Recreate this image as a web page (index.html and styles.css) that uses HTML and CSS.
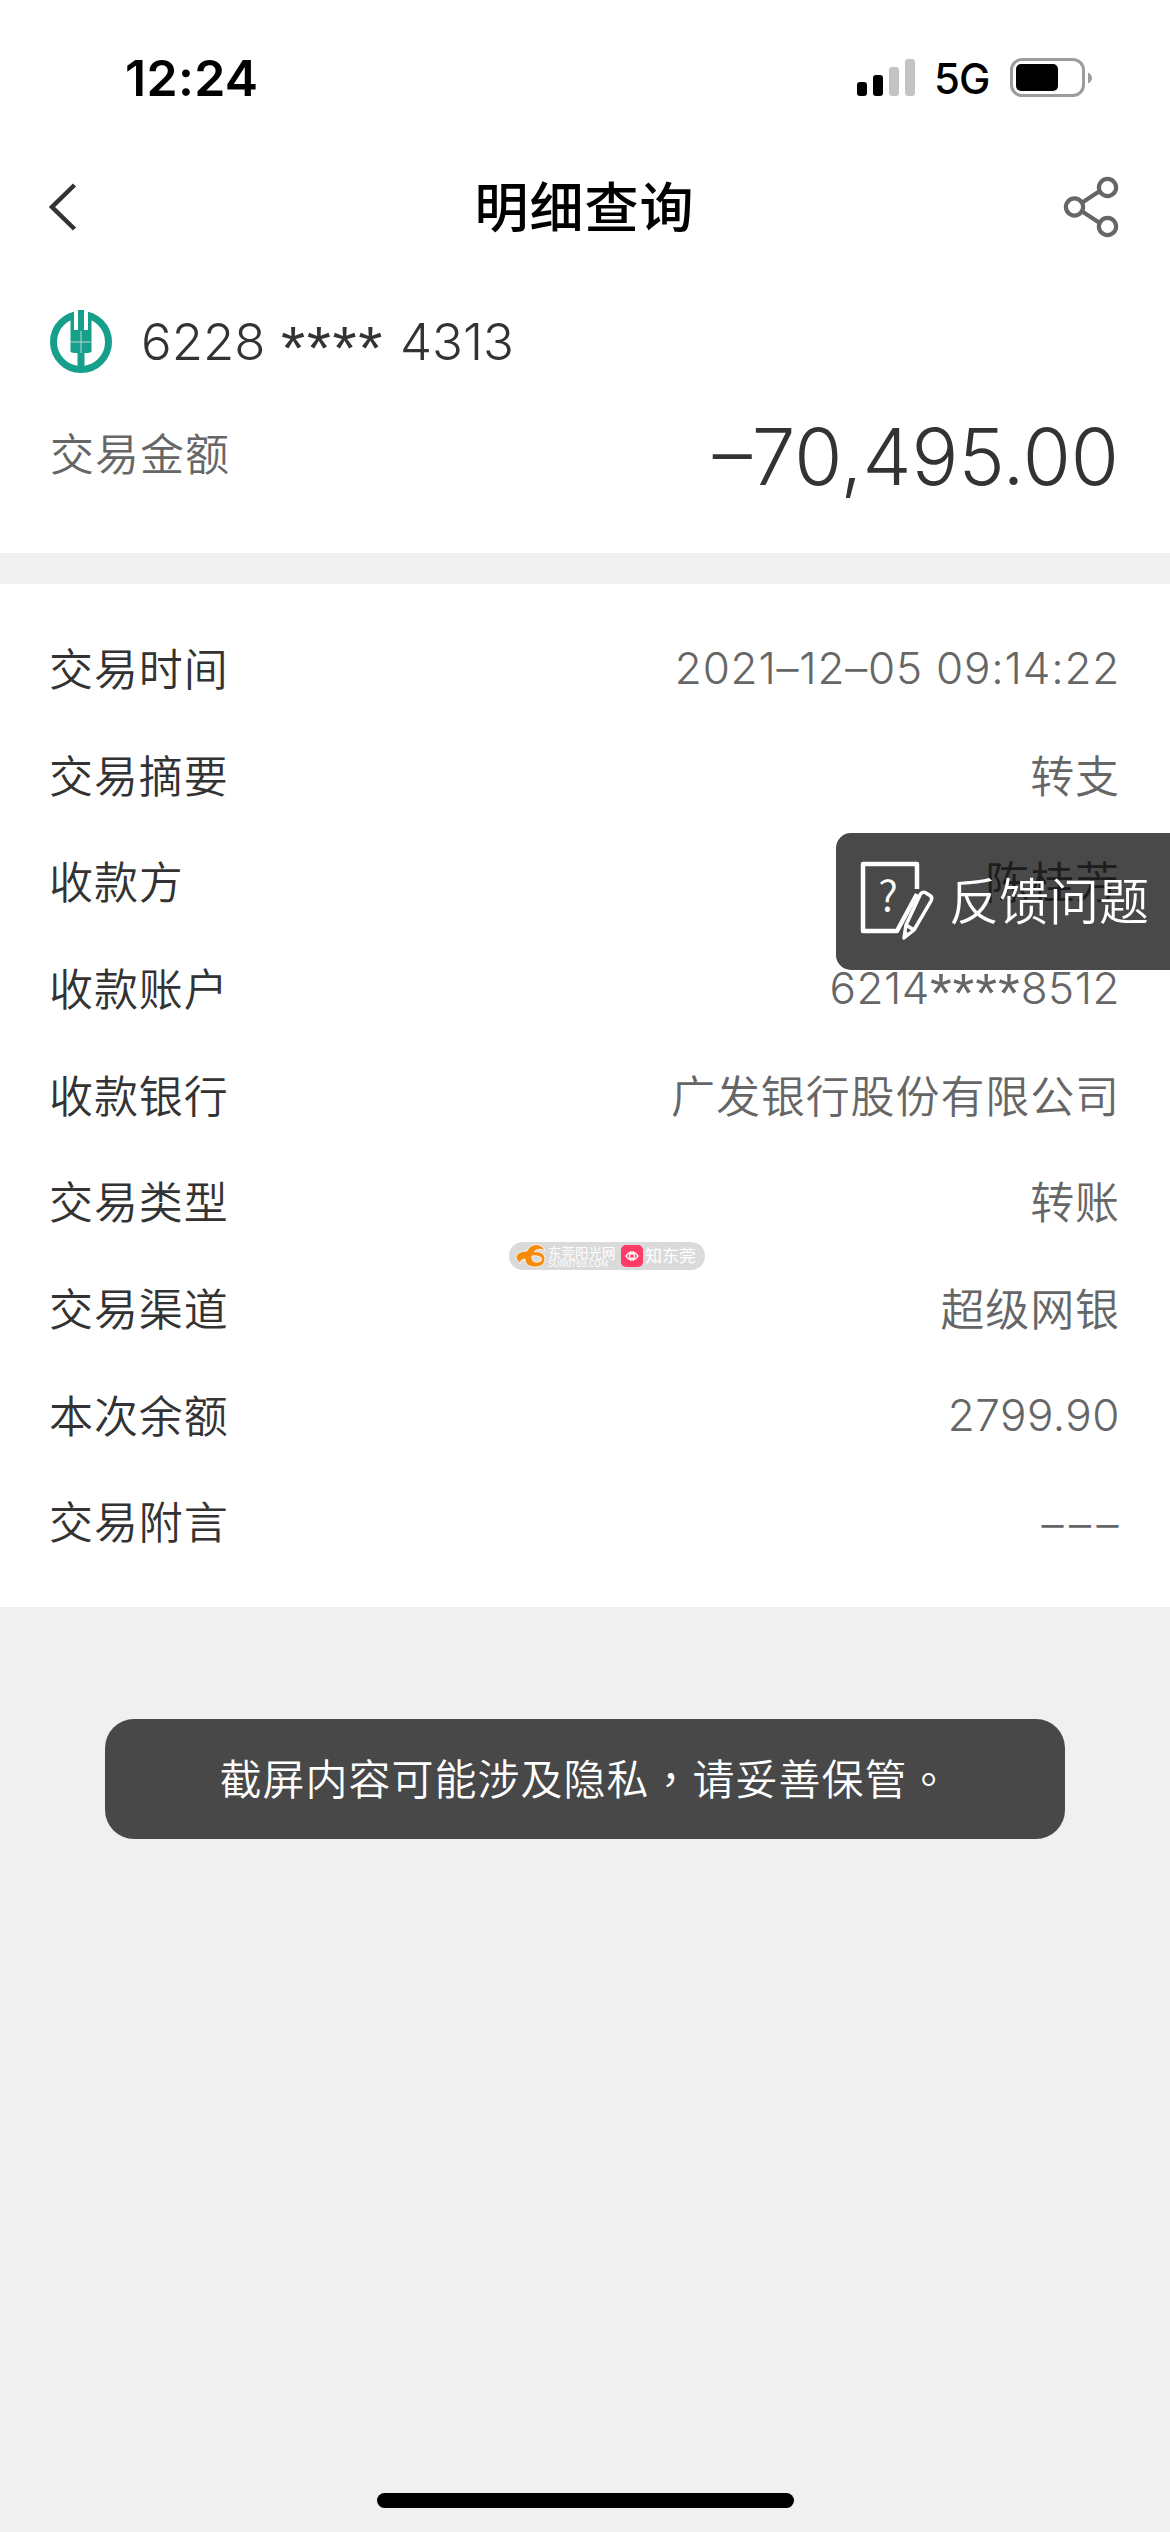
FILE: index.html
```html
<!DOCTYPE html>
<html lang="zh-CN">
<head>
<meta charset="utf-8">
<title>明细查询</title>
<link rel="stylesheet" href="styles.css">
</head>
<body>
<header class="status">
  <span class="time">12:24</span>
  <div class="status-right">
    <svg class="signal" width="58" height="38" viewBox="0 0 58 38">
      <rect x="0" y="23" width="10" height="14" rx="3"/>
      <rect x="16" y="16" width="10" height="21" rx="3"/>
      <rect class="off" x="32" y="8" width="10" height="29" rx="3"/>
      <rect class="off" x="48" y="0" width="10" height="37" rx="3"/>
    </svg>
    <span class="network">5G</span>
    <svg class="battery" width="83" height="40" viewBox="0 0 83 40">
      <rect class="shell" x="1.5" y="1.5" width="72" height="36" rx="10.5"/>
      <rect x="6" y="6" width="42" height="27" rx="5"/>
      <path class="nub" d="M78 14.5C80.500 15.500 82 17.500 82 20C82 22.500 80.500 24.500 78 25.500Z"/>
    </svg>
  </div>
</header>
<nav class="navbar">
  <svg class="back" width="28" height="48" viewBox="0 0 28 48"><path d="M25.500 2L3 24L25.500 46"/></svg>
  <h1 class="title">明细查询</h1>
  <svg class="share" width="56" height="62" viewBox="0 0 56 62">
    <path d="M20 26L36 15.500M20 36L36 46.500"/>
    <circle cx="11.500" cy="31" r="8.600"/><circle cx="44.500" cy="11.500" r="8.600"/><circle cx="44.500" cy="50.500" r="8.600"/>
  </svg>
</nav>
<section class="summary">
  <div class="account">
    <svg class="logo" width="62" height="64" viewBox="0 0 62 64">
      <circle class="ring" cx="31" cy="32" r="27.500"/>
      <path class="gap" d="M24 0H38V21H24Z"/>
      <path class="mark" d="M20.500 4L24 2V20H28V0H34V20H38V2L41.500 4V42L38 43H34.500V62H27.500V43H24L20.500 42Z"/>
      <path class="seam" d="M31 21V43M21 32H41"/>
    </svg>
    <span class="number n1">6228</span><span class="number stars">****</span><span class="number n2">4313</span>
  </div>
  <div class="amount-row"><span class="muted">交易金额</span><span class="amount">–70,495.00</span></div>
</section>
<dl class="details">
  <div class="row"><dt>交易时间</dt><dd class="num date">2021–12–05 09:14:22</dd></div>
  <div class="row"><dt>交易摘要</dt><dd>转支</dd></div>
  <div class="row"><dt>收款方</dt><dd>陈桂芳</dd></div>
  <div class="row"><dt>收款账户</dt><dd class="num card">6214<span class="ast">****</span>8512</dd></div>
  <div class="row"><dt>收款银行</dt><dd>广发银行股份有限公司</dd></div>
  <div class="row"><dt>交易类型</dt><dd>转账</dd></div>
  <div class="row"><dt>交易渠道</dt><dd>超级网银</dd></div>
  <div class="row"><dt>本次余额</dt><dd class="num balance">2799.90</dd></div>
  <div class="row"><dt>交易附言</dt><dd class="num dashes">–––</dd></div>
</dl>
<div class="toast">截屏内容可能涉及隐私<span class="punct" lang="zh-TW">，</span>请妥善保管<span class="punct" lang="zh-TW">。</span></div>
<div class="home"></div>
<div class="feedback">
  <svg class="note" width="78" height="84" viewBox="0 0 78 84">
    <path class="page" d="M57 28V3H3V70H37L57 33"/>
    <path class="pen" d="M60.500 33Q62.500 30 66 32L70 34.500Q73 36.500 71 40L54 69L44 77L46 64Z M46 64L54 69"/>
    <path class="tip" d="M45 70L50 73L43 79Z"/>
    <text x="28" y="50" text-anchor="middle">?</text>
  </svg>
  <span class="feedback-label">反馈问题</span>
</div>
<div class="badge">
  <svg class="sun" width="32" height="24" viewBox="0 0 32 24">
    <path fill-rule="evenodd" d="M12 7C15 1 20 0 24 1C27 2 29 4 30 7C26 4 21 5 19 8C22 7 29 8 30 14C30 20 26 23 20 23C14 23 10 20 10 15C7 15 5 17 5 20C4 17 1 16 1 13C2 9 7 7 12 7ZM17 12C16 17 20 20 26 17C28 14 25 11 17 12Z"/>
  </svg>
  <span class="site">东莞阳光网<small>SUN0769.COM</small></span>
  <svg class="eye" width="22" height="22" viewBox="0 0 22 22">
    <rect width="22" height="22" rx="5"/><path d="M5 11Q11 3 17 11Q11 19 5 11Z"/><circle cx="11" cy="11" r="2.500"/>
  </svg>
  <span class="app">知东莞</span>
</div>
</body>
</html>
```
FILE: styles.css
```css
* { box-sizing: border-box; margin: 0; padding: 0; }
body {
  position: relative;
  width: 1170px;
  height: 2532px;
  overflow: hidden;
  display: flex;
  flex-direction: column;
  background: #f0f0f0;
  color: #333;
  font-family: "Noto Sans CJK SC", sans-serif;
}
svg { display: block; flex: none; }
.status {
  height: 156px;
  padding: 0 79px 0 125px;
  display: flex;
  justify-content: space-between;
  align-items: center;
  background: #fff;
  color: #000;
  font-family: Inter, sans-serif;
}
.time { font-size: 50px; font-weight: 600; letter-spacing: 0.300px; }
.status-right { display: flex; align-items: center; }
.off { fill: #c4c4c4; }
.network { width: 54px; margin: 0 22px 0 19px; font-size: 42px; font-weight: 500; letter-spacing: -1px; }
.battery { margin-right: -2px; }
.shell { fill: none; stroke: #9c9c9c; stroke-width: 3; }
.nub { fill: #9c9c9c; }
.navbar {
  height: 103px;
  padding: 0 51px 1px 49px;
  display: flex;
  align-items: center;
  justify-content: space-between;
  background: #fff;
}
.back path { fill: none; stroke: #333; stroke-width: 4.5; }
.title { color: #000; font-size: 54px; font-weight: 500; letter-spacing: 1px; line-height: 80px; padding: 0 0 4px 29px; }
.share path, .share circle { fill: none; stroke: #666; stroke-width: 4.2; }
.summary { height: 294px; padding: 51px 51px 0 50px; background: #fff; }
.account { height: 64px; display: flex; align-items: center; }
.ring { fill: none; stroke: #16a08b; stroke-width: 7; }
.gap { fill: #fff; }
.mark { fill: #16a08b; }
.seam { stroke: #b9d5cf; stroke-width: 1; }
.number { font-family: Inter, sans-serif; font-size: 51px; font-weight: 350; line-height: 64px; }
.n1 { margin-left: 29px; width: 140px; }
.stars { width: 119px; padding-top: 12px; font-family: "Liberation Sans", sans-serif; font-size: 62px; letter-spacing: 1.6px; }
.amount-row { height: 108px; margin-top: 27px; display: flex; align-items: center; justify-content: space-between; }
.muted { padding-bottom: 6px; color: #666; font-size: 44px; font-weight: 350; letter-spacing: 1px; }
.amount { padding-top: 3px; font-family: Inter, sans-serif; font-size: 78px; font-weight: 350; }
.details { height: 1023px; margin-top: 31px; padding-top: 30px; background: #fff; flex: none; }
.row { height: 106.700px; padding: 0 51px 0 49px; display: flex; align-items: center; justify-content: space-between; font-size: 44px; font-weight: 350; letter-spacing: 0.900px; }
dt, dd { padding-bottom: 1px; }
dd { color: #666; margin-right: -1px; }
.num { padding: 2px 0 0; font-family: Inter, sans-serif; font-weight: 350; letter-spacing: 0.500px; }
.date { letter-spacing: 0.800px; }
.ast { font-family: "Liberation Sans", sans-serif; font-size: 56px; line-height: 0; vertical-align: -8px; letter-spacing: 0.900px; }
.dashes { padding-top: 6px; letter-spacing: 5.500px; margin-right: -5px; }
.toast {
  width: 960px;
  height: 120px;
  margin: 112px auto 0;
  border-radius: 29px;
  background: #484848;
  color: #fff;
  font-size: 42px;
  font-weight: 350;
  letter-spacing: 1px;
  line-height: 116px;
  text-align: center;
}
.punct { font-family: "Noto Sans CJK TC", sans-serif; }
.home { width: 417px; height: 15px; margin: auto auto 24px; border-radius: 8px; background: #000; }
.feedback {
  position: absolute;
  top: 833px;
  right: 0;
  width: 334px;
  height: 137px;
  padding-left: 24px;
  display: flex;
  align-items: center;
  gap: 11px;
  border-radius: 15px 0 0 15px;
  background: rgba(0, 0, 0, 0.715);
  color: #fff;
  font-size: 50px;
  font-weight: 350;
  white-space: nowrap;
}
.feedback-label { padding-bottom: 8px; }
.note { margin-top: 3px; }
.note path { fill: none; stroke: #fff; stroke-width: 4.500; stroke-linejoin: round; }
.note .pen { stroke-width: 3.500; }
.note .tip { fill: #fff; stroke: none; }
.note text { fill: #fff; font-family: "Noto Sans CJK SC", sans-serif; font-size: 42px; font-weight: 350; }
.badge {
  position: absolute;
  top: 1242px;
  left: 509px;
  width: 196px;
  height: 28px;
  padding-left: 6px;
  display: flex;
  align-items: center;
  border-radius: 14px;
  background: #dadada;
  color: #fff;
  white-space: nowrap;
}
.sun path { fill: #f68b0a; stroke: #fff; stroke-width: 0.800; }
.site { width: 69px; margin: 0 4px 0 1px; font-size: 13.500px; line-height: 15px; }
.site small { display: block; font-size: 9px; line-height: 8px; }
.eye rect { fill: #fb3c68; }
.eye path, .eye circle { fill: none; stroke: #fff; stroke-width: 1.300; }
.app { margin-left: 2px; padding-bottom: 3px; font-size: 17px; }
```
